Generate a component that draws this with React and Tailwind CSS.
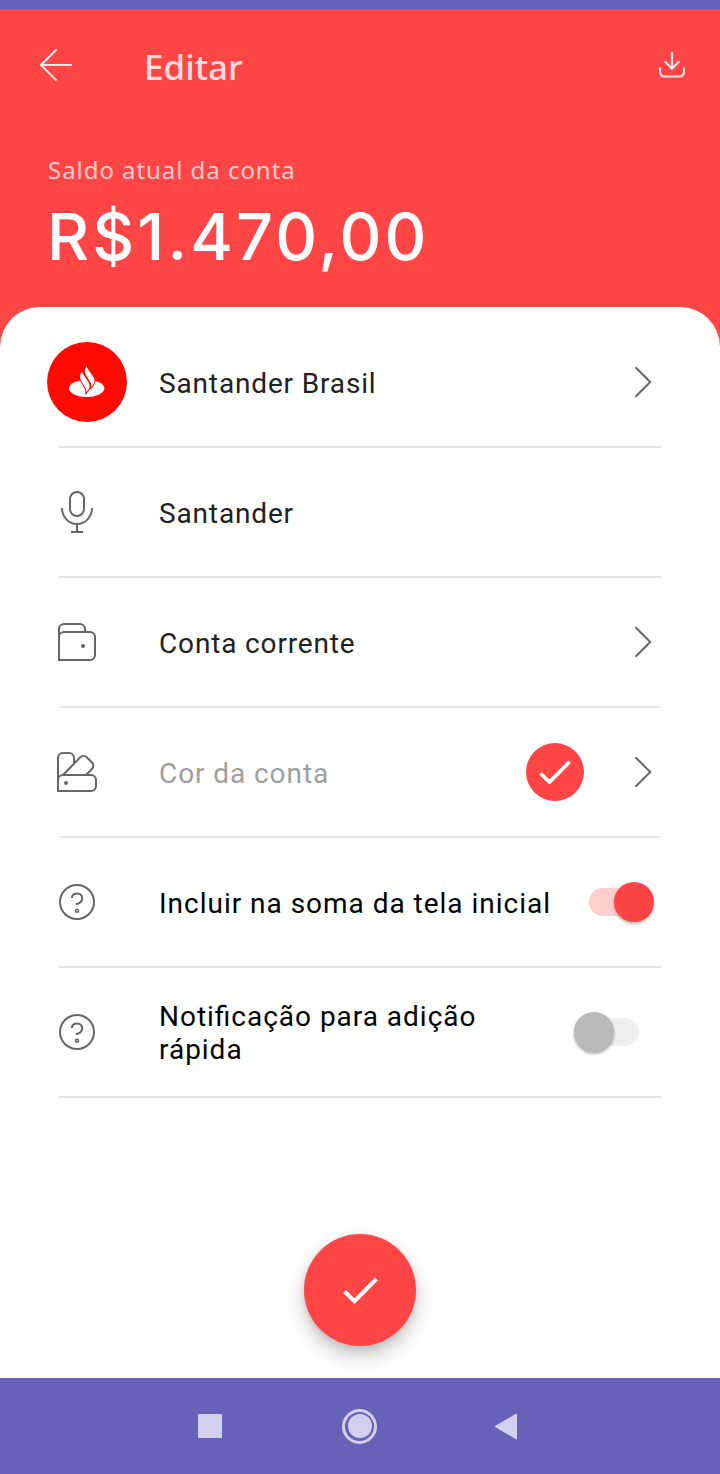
import React, { useState } from "react";

const BackIcon = () => (
  <svg width="32" height="32" viewBox="0 0 32 32" fill="none" stroke="#ffe9e9" strokeWidth="2">
    <path d="M32 16H1M16.500 .5 1 16 16.500 31.500" />
  </svg>
);

const DownloadIcon = () => (
  <svg width="26" height="26" viewBox="0 0 26 26" fill="none" stroke="#ffe3e3" strokeWidth="2.2">
    <path d="M13 0v16.5M5.7 9.3 13 16.6l7.3-7.3M1 15.5V20a4.5 4.5 0 0 0 4.500 4.500h15A4.500 4.500 0 0 0 25 20v-4.500" />
  </svg>
);

const BankLogo = () => (
  <svg width="80" height="80" viewBox="0 0 240 240">
    <circle cx="120" cy="120" r="120" fill="#ff0a00" />
    <ellipse cx="119" cy="139" rx="53" ry="26" fill="#fff" />
    <g fill="#fff" stroke="#ff0a00" strokeWidth="6" paintOrder="stroke">
      <path d="M105 88c-8 12-7 21-1 31l8 13c5 8 7 12 6 19 12-13 12-21 5-33l-11-16c-4-6-6-9-7-14Z" />
      <path d="M119 72c-8 12-6 21 0 31l9 14c5 8 6 12 4 19 13-12 13-22 6-33l-12-17c-4-6-6-9-7-14Z" />
    </g>
  </svg>
);

const MicIcon = () => (
  <svg width="32" height="42" viewBox="0 0 32 42" fill="none" stroke="#666" strokeWidth="2">
    <rect x="9" y="1" width="14" height="24" rx="7" />
    <path d="M1 17a15 16 0 0 0 30 0M16 33v8M10 41h12" />
  </svg>
);

const WalletIcon = () => (
  <svg width="38" height="38" viewBox="0 0 38 38" fill="none" stroke="#666" strokeWidth="2">
    <path d="M1 14V6a5 5 0 0 1 5-5h16a5 5 0 0 1 5 5v3" />
    <path d="M1 14a5 5 0 0 1 5-5h26a5 5 0 0 1 5 5v18a5 5 0 0 1-5 5H1V14Z" />
    <circle cx="25" cy="23" r="2" fill="#666" stroke="none" />
  </svg>
);

const PaletteIcon = () => (
  <svg width="40" height="40" viewBox="0 0 40 40" fill="none" stroke="#666" strokeWidth="2">
    <path d="M1 28V6a5 5 0 0 1 5-5h6a5 5 0 0 1 5 5v5" />
    <path d="M6 23 23 5.500a5 5 0 0 1 7 0l5 5a5 5 0 0 1 0 6.500L29 23" />
    <path d="M1 28a5 5 0 0 1 5-5h28a5 5 0 0 1 5 5v6a5 5 0 0 1-5 5H1V28Z" />
    <circle cx="9" cy="31" r="2" fill="#666" stroke="none" />
  </svg>
);

const HelpIcon = () => (
  <svg width="36" height="36" viewBox="0 0 36 36" fill="none" stroke="#666" strokeWidth="2">
    <circle cx="18" cy="18" r="17" />
    <path d="M12.800 14c.2-2.800 2.200-4.600 5.200-4.600s5.200 1.900 5.200 4.800c0 3.200-2.500 5.300-6.400 6" />
    <circle cx="18" cy="26.700" r="1.500" strokeWidth="1.600" />
  </svg>
);

const Chevron = () => (
  <svg className="mr-[9px]" width="18" height="32" viewBox="0 0 18 32" fill="none" stroke="#666" strokeWidth="2">
    <path d="M1.500 1.200 16.300 16 1.500 30.800" />
  </svg>
);

const Check = ({ width }) => (
  <svg width={width} viewBox="0 0 35 27" fill="none" stroke="#fff" strokeWidth="4">
    <path d="M1.500 14.500 11.500 24.200 33.500 2" />
  </svg>
);

const Toggle = ({ checked, onChange, className }) => (
  <button
    type="button"
    role="switch"
    aria-checked={checked}
    onClick={onChange}
    className={`flex h-10 w-[65px] shrink-0 items-center ${className}`}
  >
    <span
      className={`flex h-7 w-[50px] items-center rounded-full ${
        checked ? "ml-0 bg-[#ffcfcf]" : "ml-[15px] bg-[#eeeeee]"
      }`}
    >
      <span
        className={`size-10 shrink-0 rounded-full shadow-[0_2px_3px_rgba(0,0,0,0.3)] ${
          checked ? "ml-[25px] bg-[#fc4444]" : "-ml-[15px] bg-[#b9b9b9]"
        }`}
      />
    </span>
  </button>
);

const Row = ({ icon, label, labelClass = "text-[#212121] tracking-[0.85px]", children }) => (
  <div className="flex h-[130px] items-center border-b-2 border-[#e4e4e4]">
    <div className="w-[100px] shrink-0">{icon}</div>
    <div className={`flex-1 pt-0.5 text-[28px] leading-[33px] ${labelClass}`}>{label}</div>
    {children}
  </div>
);

const App = () => {
  const [includeInSum, setIncludeInSum] = useState(true);
  const [notify, setNotify] = useState(false);

  return (
    <div className="flex h-[1474px] w-[720px] flex-col overflow-hidden bg-[#ff4545] font-['Roboto',sans-serif]">
      <div className="h-[9px] shrink-0 bg-[#6662b7]" />

      <header className="h-[298px] shrink-0 font-['Noto_Sans',sans-serif]">
        <div className="flex h-28 items-center pr-[35px] pl-10">
          <BackIcon />
          <h1 className="ml-[72px] flex-1 pt-0.5 text-[35px] leading-none font-medium text-[#ffdcdc]">
            Editar
          </h1>
          <DownloadIcon />
        </div>
        <div className="pt-6 pl-12">
          <p className="text-[24px] leading-[50px] tracking-[0.95px] text-[#ffcccc]">Saldo atual da conta</p>
          <p className="-ml-px font-['Inter',sans-serif] text-[65px] leading-[84px] font-medium tracking-[3.1px] text-white">
            R$1.470,00
          </p>
        </div>
      </header>

      <main className="flex flex-1 flex-col rounded-t-[40px] bg-white px-[59px] pt-[11px]">
        <Row icon={<div className="-ml-3"><BankLogo /></div>} label="Santander Brasil">
          <Chevron />
        </Row>
        <Row icon={<div className="ml-0.5"><MicIcon /></div>} label="Santander" />
        <Row icon={<div className="-ml-px"><WalletIcon /></div>} label="Conta corrente">
          <Chevron />
        </Row>
        <Row
          icon={<div className="-ml-0.5"><PaletteIcon /></div>}
          label="Cor da conta"
          labelClass="text-[#9e9e9e] tracking-[0.92px]"
        >
          <div className="mr-[50px] flex size-[58px] items-center justify-center rounded-full bg-[#ff4545]">
            <Check width={32} />
          </div>
          <Chevron />
        </Row>
        <Row icon={<HelpIcon />} label="Incluir na soma da tela inicial" labelClass="text-black tracking-[0.98px]">
          <Toggle checked={includeInSum} onChange={() => setIncludeInSum(!includeInSum)} className="mr-[7px]" />
        </Row>
        <Row
          icon={<HelpIcon />}
          label="Notificação para adição rápida"
          labelClass="text-black tracking-[0.98px] pr-8 [font-feature-settings:'liga']"
        >
          <Toggle checked={notify} onChange={() => setNotify(!notify)} className="mr-[22px]" />
        </Row>

        <button
          type="button"
          className="mt-[136px] flex size-28 items-center justify-center self-center rounded-full bg-[#ff4545] shadow-[0_10px_20px_rgba(0,0,0,0.22),0_2px_6px_rgba(0,0,0,0.12)]"
        >
          <Check width={35} />
        </button>
      </main>

      <nav className="flex h-24 shrink-0 items-center bg-[#6662b7] pl-[198px]">
        <div className="size-6 rounded-[1px] bg-[#d2d0ec]" />
        <div className="ml-[120px] flex size-[35px] items-center justify-center rounded-full border-[3px] border-[#d2d0ec]">
          <div className="size-6 rounded-full bg-[#d2d0ec]" />
        </div>
        <svg className="ml-[117px]" width="24" height="27" viewBox="0 0 24 27">
          <path d="M22.500 1v25L1 13.500Z" fill="#d2d0ec" stroke="#d2d0ec" strokeLinejoin="round" />
        </svg>
      </nav>
    </div>
  );
};

export default App;
